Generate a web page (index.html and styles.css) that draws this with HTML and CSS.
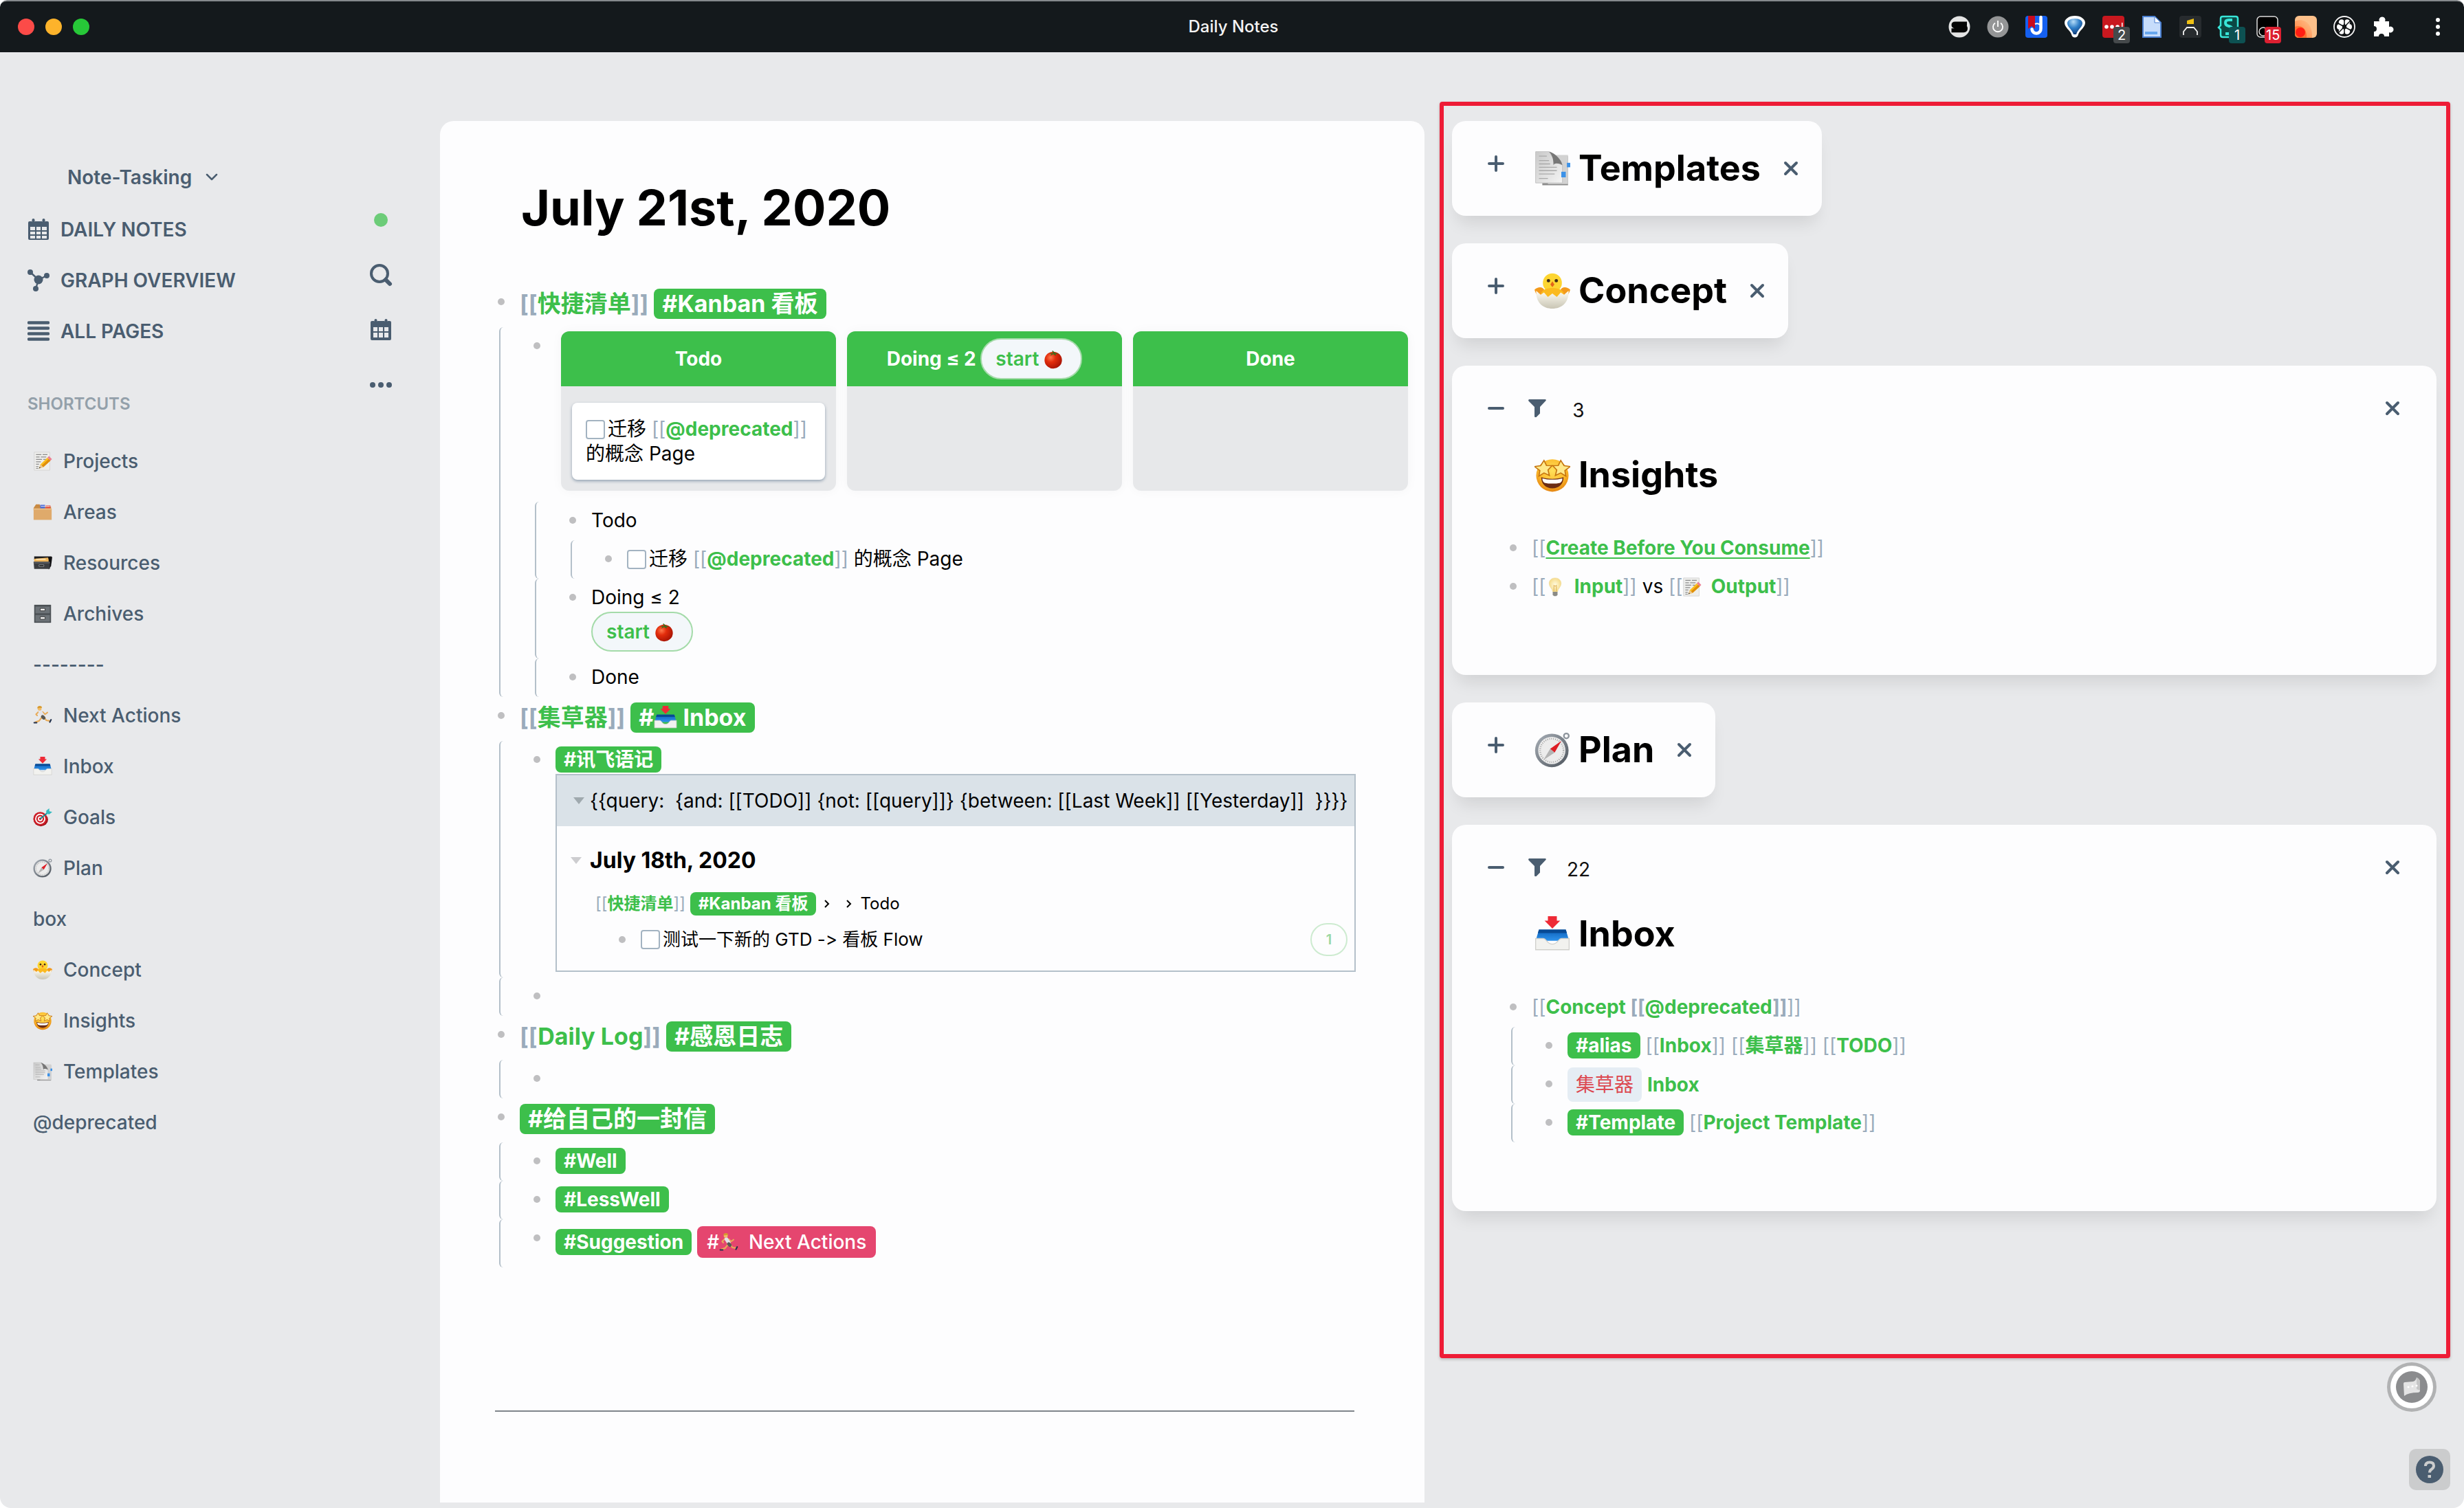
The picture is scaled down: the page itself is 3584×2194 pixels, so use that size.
FILE: index.html
```html
<!DOCTYPE html>
<html lang="en">
<head>
<meta charset="utf-8">
<title>Daily Notes</title>
<meta name="viewport" content="width=device-width, initial-scale=1">
<link rel="stylesheet" href="styles.css">
</head>
<body>
<svg class="sprite" aria-hidden="true">
  <defs>
    <linearGradient id="g-paper" x1="0" y1="0" x2="1" y2="1"><stop offset="0" stop-color="#c9c9c9"/><stop offset="1" stop-color="#f4f4f4"/></linearGradient>
    <linearGradient id="g-blue" x1="0" y1="0" x2="0" y2="1"><stop offset="0" stop-color="#0c5fb8"/><stop offset="1" stop-color="#2f93ec"/></linearGradient>
    <radialGradient id="g-face" cx=".5" cy=".35" r=".7"><stop offset="0" stop-color="#ffe15a"/><stop offset=".6" stop-color="#fbb82a"/><stop offset="1" stop-color="#e07a0c"/></radialGradient>
    <radialGradient id="g-tomato" cx=".35" cy=".35" r=".7"><stop offset="0" stop-color="#ff7a4c"/><stop offset=".4" stop-color="#e32d0c"/><stop offset="1" stop-color="#a81404"/></radialGradient>
    <linearGradient id="g-egg" x1="0" y1="0" x2="0" y2="1"><stop offset="0" stop-color="#fffdf4"/><stop offset="1" stop-color="#c9c5b4"/></linearGradient>
    <linearGradient id="g-steel" x1="0" y1="0" x2="1" y2="1"><stop offset="0" stop-color="#a9b0b8"/><stop offset="1" stop-color="#4d545c"/></linearGradient>
    <radialGradient id="g-bulb"><stop offset="0" stop-color="#fffbe0"/><stop offset="1" stop-color="#f6dc8c"/></radialGradient>
    <linearGradient id="g-orange" x1="1" y1="0" x2="0" y2="1"><stop offset="0" stop-color="#ffc48c"/><stop offset="1" stop-color="#ff7a3c"/></linearGradient>
    <radialGradient id="g-balloon" cx=".4" cy=".2" r=".8"><stop offset="0" stop-color="#b4dcf8"/><stop offset=".5" stop-color="#2f7fc8"/><stop offset="1" stop-color="#123e7c"/></radialGradient>
  </defs>
  <symbol id="e-memo" viewBox="0 0 32 32"><path d="M2 1h26v30H2z" fill="#eeeeec" stroke="#d4d4d2"/><path d="M5 5h9m2 0h8M5 9h6m2 0h9M5 13h10m2 0h5M5 17h8M5 21h5M5 25h4M5 28h4" stroke="#8c8c8c" stroke-width="1.2"/><path d="M10 28l2.500-7L24 10l5 5-12 11z" fill="#fbbf1e"/><path d="M14.500 23L26.500 12l2.500 3-12 11z" fill="#e08e0c"/><path d="M10 28l2.500-7 4.500 5z" fill="#e9c694"/><path d="M10 28l1-2.500 1.600 1.600z" fill="#333"/><path d="M24 10l2.500-2.500 5 5L29 15z" fill="#ed7f93"/></symbol>
  <symbol id="e-dividers" viewBox="0 0 32 32"><path d="M1 9l4-6h6l2 4h17v6H1z" fill="#c88a43"/><path d="M12 4h8v7h-8z" fill="#4a6ad8"/><path d="M21 5h8v6h-8z" fill="#e6523f"/><path d="M13 6h15v1H13z" fill="#f1f1f1"/><path d="M1 10h30v19H1z" fill="#dfaa6b"/><path d="M1 10h30v2H1z" fill="#eabd84"/></symbol>
  <symbol id="e-filebox" viewBox="0 0 32 32"><path d="M2 5h29l-3 6H2z" fill="#1d1d1f"/><path d="M2 9l23-2 3 8H2z" fill="#f1b65a"/><path d="M5 9h16v2H5z" fill="#fbe3b3"/><path d="M26 6l6 0-2 15-4 6z" fill="#0f0f11"/><path d="M1 14h27v12H2z" fill="#3b3d40"/><path d="M1 14h27v3H1z" fill="#56595d"/><path d="M10 19h8v3h-8z" fill="#222" stroke="#8e9195"/></symbol>
  <symbol id="e-cabinet" viewBox="0 0 32 32"><path d="M2 1h28v30H2z" fill="#4b5054"/><path d="M4 4h24v11H4zM4 18h24v11H4z" fill="#6c7277"/><path d="M12 7h8v4h-8zM12 21h8v4h-8z" fill="#f0f0f0" stroke="#333"/></symbol>
  <symbol id="e-runner" viewBox="0 0 32 32"><g fill="none" stroke-linecap="round" stroke-linejoin="round"><path d="M18 18l4 6 6 1" stroke="#e8ab58" stroke-width="2.500"/><path d="M14 20l-4 5-6 2" stroke="#e8ab58" stroke-width="2.500"/><path d="M9 10l-4 4 2 2M16 10l4 4 4-3" stroke="#e8ab58" stroke-width="2.200"/><path d="M12 10l4 6" stroke="#e4e4ea" stroke-width="6"/><path d="M16 18l2 2" stroke="#5b5952" stroke-width="5.500"/><path d="M28 27l2-4M2 28l4 0" stroke="#20304c" stroke-width="2.500"/></g><circle cx="11" cy="4.500" r="3.300" fill="#f1bd6a"/><path d="M7 4c0-5 8-5 8-1z" fill="#d89a2e"/></symbol>
  <symbol id="e-inbox" viewBox="0 0 32 32"><path d="M12 0h8v4h3l-7 7-7-7h3z" fill="#ee2a36"/><path d="M4 12h24l3 10H1z" fill="url(#g-blue)"/><path d="M4 12h24l1 3H3z" fill="#084a94"/><path d="M1 20h7c3 0 3 5 8 5s5-5 8-5h7v10H1z" fill="#f2f2ef" stroke="#cfcfcb" stroke-width=".8"/></symbol>
  <symbol id="e-target" viewBox="0 0 32 32"><ellipse cx="13" cy="20" rx="12" ry="11" fill="#9c0f16"/><circle cx="12" cy="18.500" r="11.500" fill="#cc1f28"/><circle cx="12" cy="18.500" r="8.500" fill="#fff"/><circle cx="12" cy="18.500" r="6.500" fill="#cc1f28"/><circle cx="12" cy="18.500" r="4" fill="#fff"/><circle cx="12" cy="18.500" r="2" fill="#cc1f28"/><path d="M12 18.500L25 8" stroke="#128a8f" stroke-width="2.200"/><path d="M22 10V5l5-4v5l5 1-5 4z" fill="#36bcc1"/></symbol>
  <symbol id="e-compass" viewBox="0 0 32 32"><circle cx="28.500" cy="3.500" r="2.200" fill="none" stroke="#8d949c" stroke-width="1.400"/><circle cx="15.500" cy="16.500" r="15" fill="url(#g-steel)"/><circle cx="15.500" cy="16.500" r="12.200" fill="#ececec"/><circle cx="15.500" cy="16.500" r="10.500" fill="none" stroke="#a4a4a4" stroke-width="1.500" stroke-dasharray=".6 1.200"/><path d="M24 8l-6 10.500-4-3.500z" fill="#dd1f26"/><path d="M8 25l6-10 4 3.500z" fill="#b4b4b4"/></symbol>
  <symbol id="e-chick" viewBox="0 0 32 32"><path d="M0 15c3-3 8-3 9 1l-5 6c-2-2-3-4-4-7zM32 15c-3-3-8-3-9 1l5 6c2-2 3-4 4-7z" fill="#f39a1c"/><circle cx="16" cy="9" r="8.500" fill="#fdd531"/><path d="M6 18c2-6 18-6 20 0v6H6z" fill="#fbba1f"/><path d="M1.500 16l4 3.500 3-2 3.500 4 4-3 4 3 3.500-4 3 2 4-3.500C31 27 24 32 16 32S1 27 1.500 16z" fill="url(#g-egg)"/><circle cx="12.500" cy="7" r="1.500" fill="#3f2a16"/><circle cx="19.500" cy="7" r="1.500" fill="#3f2a16"/><path d="M16 7.500l1.800 3-1.800 2.200-1.800-2.200z" fill="#e3641a"/></symbol>
  <symbol id="e-starstruck" viewBox="0 0 32 32"><circle cx="16" cy="16.500" r="14.500" fill="url(#g-face)"/><path d="M6 18c5 2 15 2 20 0 0 6-4 10-10 10S6 24 6 18z" fill="#6b2c14"/><path d="M7 19c5 1.600 13 1.600 18 0 0 2-1 3.500-2 4-4 1-10 1-14 0-1-.5-2-2-2-4z" fill="#fff"/><path d="M8.500 3l2.200 4.500 5 .2-3.600 3.800 1.200 5-4.800-2.300L4 17l.8-5L0 8.500l5.500-.8z" fill="#ffe98a" stroke="#c5740f" stroke-width="1"/><path d="M23.500 3l-2.200 4.500-5 .2 3.600 3.800-1.200 5 4.800-2.300 4.500 2.800-.8-5L32 8.500l-5.500-.8z" fill="#ffe98a" stroke="#c5740f" stroke-width="1"/></symbol>
  <symbol id="e-tabs" viewBox="0 0 32 32"><path d="M7 5h23v26H7z" fill="#8b8b8b"/><path d="M12 4h18v26H12z" fill="#d2d2d2"/><path d="M29 11h3v4h-3z" fill="#3c92e8"/><path d="M1 1h12c3 5 5 9 12 12v16H1z" fill="url(#g-paper)" stroke="#c2c2c2" stroke-width=".6"/><path d="M13 1c3 0 11 6 12 12-4-2-7-2-8 0 0-5-1-9-4-12z" fill="#777"/><path d="M4 5h7M4 9h9M4 12h10M4 15h16M4 18h16M4 21h14M4 25h8" stroke="#a9a9a9" stroke-width=".9"/><path d="M24 19h4v5h-4z" fill="#3c92e8"/></symbol>
  <symbol id="e-tomato" viewBox="0 0 32 32"><ellipse cx="16" cy="17" rx="14.500" ry="14" fill="url(#g-tomato)"/><path d="M16 6l-7-1 4 2-2 3 5-3 4 3 0-3 5-1-6-1-4-4-1 1z" fill="#3f6d1c"/></symbol>
  <symbol id="e-bulb" viewBox="0 0 32 32"><path d="M16 1c6 0 10 4 10 9 0 6-5 8-6 14h-8c-1-6-6-8-6-14 0-5 4-9 10-9z" fill="url(#g-bulb)" stroke="#ecd796" stroke-width=".6"/><path d="M14 23V13l2 2 2-2v10" fill="none" stroke="#d9a542"/><path d="M12 24h8v5l-2 2h-4l-2-2z" fill="#8b8b86"/></symbol>
  <symbol id="i-calendar" viewBox="0 0 32 32"><path fill-rule="evenodd" d="M3 4h3a3 3 0 0 0 5 0h10a3 3 0 0 0 5 0h3a2 2 0 0 1 2 2v23a2 2 0 0 1-2 2H3a2 2 0 0 1-2-2V6a2 2 0 0 1 2-2zm1 8v5h7v-5zm9 0v5h6v-5zm8 0v5h7v-5zM4 19v4h7v-4zm9 0v4h6v-4zm8 0v4h7v-4zM4 25v4h7v-4zm9 0v4h6v-4zm8 0v4h7v-4z"/><rect x="6.500" y="0" width="4" height="6" rx="2"/><rect x="21.500" y="0" width="4" height="6" rx="2"/></symbol>
  <symbol id="i-calendar-bold" viewBox="0 0 32 32"><path fill-rule="evenodd" d="M3 3h3a3 3 0 0 0 5 0h10a3 3 0 0 0 5 0h3a2 2 0 0 1 2 2v24a2 2 0 0 1-2 2H3a2 2 0 0 1-2-2V5a2 2 0 0 1 2-2zm2 9v6h6v-6zm8 0v6h6v-6zm8 0v6h6v-6zM5 20v7h6v-7zm8 0v7h6v-7zm8 0v7h6v-7z"/><rect x="6.500" y="0" width="4" height="6" rx="2"/><rect x="21.500" y="0" width="4" height="6" rx="2"/></symbol>
  <symbol id="i-graph" viewBox="0 0 32 32"><path d="M4 4l12 11L28 9M16 15l-4 13" fill="none" stroke="currentColor" stroke-width="2.500"/><circle cx="4" cy="4" r="4"/><circle cx="28" cy="9" r="4"/><circle cx="16" cy="15" r="6.500"/><circle cx="12" cy="28" r="4"/></symbol>
  <symbol id="i-list" viewBox="0 0 32 32"><path d="M2 3.500h28M2 11.500h28M2 19.500h28M2 27.500h28" fill="none" stroke="currentColor" stroke-width="4.500" stroke-linecap="round"/></symbol>
  <symbol id="i-plus" viewBox="0 0 24 24"><path d="M12 2v20M2 12h20" fill="none" stroke="currentColor" stroke-width="4" stroke-linecap="round"/></symbol>
  <symbol id="i-minus" viewBox="0 0 24 24"><path d="M2 12h20" fill="none" stroke="currentColor" stroke-width="4" stroke-linecap="round"/></symbol>
  <symbol id="i-close" viewBox="0 0 24 24"><path d="M4 4l16 16M20 4L4 20" fill="none" stroke="currentColor" stroke-width="4" stroke-linecap="round"/></symbol>
  <symbol id="i-filter" viewBox="0 0 26 26"><path d="M1 0h24q1.500 1 0 2.500L17 11v9.500L11.500 26q-2 .5-2.500-1V11L.5 2.500Q-.5 1 1 0z"/></symbol>
</svg>

<header class="topbar">
  <div class="lights"><span class="light light-red"></span><span class="light light-yellow"></span><span class="light light-green"></span></div>
  <h1 class="window-title">Daily Notes</h1>
  <div class="extensions">
    <button class="ext" aria-label="Session"><svg viewBox="0 0 32 32"><circle cx="16" cy="16" r="15.500" fill="#e4e4e4"/><path d="M27 11.500H10q-2.500 0-2.500 1.800t2.500 2.200h12q3 .5 3 3t-3 2.700H4.500" fill="none" stroke="#050505" stroke-width="6"/></svg></button>
    <button class="ext" aria-label="Power"><svg viewBox="0 0 32 32"><circle cx="16" cy="16" r="15.500" fill="#949596"/><path d="M12 10.500a7 7 0 1 0 8 0M16 7v9" fill="none" stroke="#fff" stroke-width="1.800"/></svg></button>
    <button class="ext" aria-label="Dictionary"><svg viewBox="0 0 32 32"><rect width="32" height="32" rx="4" fill="#1560f0"/><path d="M4 0h10v19l-5-4-5 4z" fill="#c80a1e"/><path d="M14 12q4-2 7 1" fill="none" stroke="#fff" stroke-width="2"/><path d="M22.500 2v16.500a6.500 6.500 0 0 1-13 1" fill="none" stroke="#fff" stroke-width="4.500" stroke-linecap="round"/></svg></button>
    <button class="ext" aria-label="Balloon"><svg viewBox="0 0 32 32"><path d="M16 0c9 0 15 5 15 10 0 7-8 11-10 17-1 6-9 6-10 0C9 21 1 17 1 10 1 5 7 0 16 0z" fill="#fff"/><path d="M16 4c7 0 11 3 11 7 0 5-7 9-9 16h-4C12 20 5 16 5 11c0-4 4-7 11-7z" fill="url(#g-balloon)"/></svg></button>
    <button class="ext" aria-label="Password"><svg viewBox="0 0 32 32"><rect width="32" height="32" rx="4" fill="#c9181f"/><g fill="#fff"><circle cx="6" cy="16" r="2.800"/><circle cx="14" cy="16" r="2.800"/><circle cx="22" cy="16" r="2.800"/><path d="M28 10h1.500v8H28z"/></g></svg><span class="badge badge-grey">2</span></button>
    <button class="ext" aria-label="Document"><svg viewBox="0 0 32 32"><path d="M3 1h17l9 9v21H3z" fill="#c7ddfb" stroke="#4a7fd0" stroke-width="2"/><path d="M20 1v9h9z" fill="#fff" stroke="#4a7fd0"/><path d="M6 23h18v4H6z" fill="#67a7ee"/></svg></button>
    <button class="ext" aria-label="Highlighter"><svg viewBox="0 0 32 32"><rect width="32" height="32" rx="4" fill="#272b2e"/><path d="M11 7l10-3v8H11z" fill="#efc114"/><path d="M6 28v-5l5-6h10l5 6v5" fill="none" stroke="#f4f4f4" stroke-width="1.800"/></svg></button>
    <button class="ext" aria-label="Surfing"><svg viewBox="0 0 32 32"><path d="M4 4q0-3 3-3h19q3 0 3 3v24q0 3-3 3H7q-3 0-3-3v-8l-3-3 3-3z" fill="#0b4844" stroke="#38e5d8" stroke-width="2.500"/><path d="M21 6h-5q-5 0-5 4t5 5 5 5-5 6h-5" fill="none" stroke="#38e5d8" stroke-width="4"/></svg><span class="badge badge-teal">1</span></button>
    <button class="ext" aria-label="Tabs"><svg viewBox="0 0 32 32"><rect x="1" y="1" width="30" height="30" rx="5" fill="#000" stroke="#ddd" stroke-width="1.500"/><circle cx="10" cy="23" r="6" fill="none" stroke="#ddd" stroke-width="1.500"/></svg><span class="badge badge-red">15</span></button>
    <button class="ext" aria-label="Clipper"><svg viewBox="0 0 32 32"><rect width="32" height="32" rx="6" fill="#fdc08a"/><path d="M0 8c14-6 26 4 25 24H6q-6 0-6-6z" fill="url(#g-orange)"/><path d="M0 16c10-4 18 4 17 16H6q-6 0-6-6z" fill="#ff7030"/><circle cx="8" cy="24" r="7" fill="#ff1d14"/></svg></button>
    <button class="ext" aria-label="Clover"><svg viewBox="0 0 32 32"><circle cx="16" cy="16" r="15" fill="#101315" stroke="#f4f4f4" stroke-width="1.800"/><g fill="#fff"><circle cx="12" cy="9.500" r="4.200"/><circle cx="20" cy="9.500" r="4.200"/><circle cx="9" cy="16" r="4"/><circle cx="23" cy="16" r="4"/><circle cx="12" cy="22.500" r="4.200"/><circle cx="20" cy="22.500" r="4.200"/></g><path d="M7 25L25 7M16 6v20M7 11l18 10" stroke="#101315" stroke-width="1.500"/></svg></button>
    <button class="ext" aria-label="Extensions"><svg viewBox="0 0 32 32"><path d="M3 8h8a4.500 4.500 0 1 1 8 0h6v8a4.500 4.500 0 1 1 0 8v6h-7a4 4 0 1 0-8 0H3v-7a4 4 0 1 0 0-8z" fill="#fff"/></svg></button>
    <button class="ext ext-menu" aria-label="Menu"><svg viewBox="0 0 32 32"><g fill="#fff"><circle cx="16" cy="6" r="3"/><circle cx="16" cy="16" r="3"/><circle cx="16" cy="26" r="3"/></g></svg></button>
  </div>
</header>

<div class="layout">
  <div class="sidebar">
    <nav class="side-nav" aria-label="Sidebar">
      <button class="graph-switch">Note-Tasking <svg class="chevron" viewBox="0 0 18 12"><path d="M2 2l7 7 7-7" fill="none" stroke="currentColor" stroke-width="2.500" stroke-linecap="round" stroke-linejoin="round"/></svg></button>
      <a class="nav-link" href="#daily"><svg class="icon-32"><use href="#i-calendar"/></svg>DAILY NOTES</a>
      <a class="nav-link" href="#graph"><svg class="icon-32"><use href="#i-graph"/></svg>GRAPH OVERVIEW</a>
      <a class="nav-link" href="#all"><svg class="icon-32"><use href="#i-list"/></svg>ALL PAGES</a>
      <h2 class="shortcuts-title">SHORTCUTS</h2>
      <ul class="shortcuts">
        <li><a href="#projects"><svg class="emoji-28"><use href="#e-memo"/></svg>Projects</a></li>
        <li><a href="#areas"><svg class="emoji-28"><use href="#e-dividers"/></svg>Areas</a></li>
        <li><a href="#resources"><svg class="emoji-28"><use href="#e-filebox"/></svg>Resources</a></li>
        <li><a href="#archives"><svg class="emoji-28"><use href="#e-cabinet"/></svg>Archives</a></li>
        <li><a href="#divider">--------</a></li>
        <li><a href="#next"><svg class="emoji-28"><use href="#e-runner"/></svg>Next Actions</a></li>
        <li><a href="#inbox"><svg class="emoji-28"><use href="#e-inbox"/></svg>Inbox</a></li>
        <li><a href="#goals"><svg class="emoji-28"><use href="#e-target"/></svg>Goals</a></li>
        <li><a href="#plan"><svg class="emoji-28"><use href="#e-compass"/></svg>Plan</a></li>
        <li><a href="#box">box</a></li>
        <li><a href="#concept"><svg class="emoji-28"><use href="#e-chick"/></svg>Concept</a></li>
        <li><a href="#insights"><svg class="emoji-28"><use href="#e-starstruck"/></svg>Insights</a></li>
        <li><a href="#templates"><svg class="emoji-28"><use href="#e-tabs"/></svg>Templates</a></li>
        <li><a href="#deprecated">@deprecated</a></li>
      </ul>
    </nav>
    <div class="tools">
      <span class="tool"><span class="sync-dot"></span></span>
      <button class="tool" aria-label="Search"><svg class="icon-32" viewBox="0 0 32 32"><circle cx="14" cy="14" r="12" fill="none" stroke="currentColor" stroke-width="4"/><path d="M23 23l6 6" fill="none" stroke="currentColor" stroke-width="6" stroke-linecap="round"/></svg></button>
      <button class="tool" aria-label="Calendar"><svg class="icon-32"><use href="#i-calendar-bold"/></svg></button>
      <button class="tool" aria-label="More"><svg class="icon-32" viewBox="0 0 32 32"><circle cx="4" cy="16" r="4"/><circle cx="16" cy="16" r="4"/><circle cx="28" cy="16" r="4"/></svg></button>
    </div>
  </div>

  <main class="page">
    <h2 class="page-title">July 21st, 2020</h2>
    <ul class="blocks">
      <li>
        <div class="row head"><span class="bullet"></span><div class="text"><span class="br">[[</span><a class="ref" href="#k">快捷清单</a><span class="br">]]</span> <a class="tag" href="#kanban">#Kanban 看板</a></div></div>
        <ul>
          <li>
            <div class="row kanban-row"><span class="bullet"></span>
              <div class="kanban">
                <section class="column"><h3 class="column-head">Todo</h3>
                  <div class="card"><label><input class="check" type="checkbox">迁移 <span class="br">[[</span><a class="ref" href="#deprecated">@deprecated</a><span class="br">]]</span><br>的概念 Page</label></div>
                </section>
                <section class="column"><h3 class="column-head">Doing ≤ 2&nbsp;<button class="pill">start <svg class="emoji-28"><use href="#e-tomato"/></svg></button></h3></section>
                <section class="column"><h3 class="column-head">Done</h3></section>
              </div>
            </div>
            <ul>
              <li>
                <div class="row"><span class="bullet"></span><div class="text">Todo</div></div>
                <ul>
                  <li><div class="row"><span class="bullet"></span><label class="text"><input class="check" type="checkbox">迁移 <span class="br">[[</span><a class="ref" href="#deprecated">@deprecated</a><span class="br">]]</span> 的概念 Page</label></div></li>
                </ul>
              </li>
              <li><div class="row"><span class="bullet"></span><div class="text">Doing ≤ 2<button class="pill pill-block">start <svg class="emoji-28"><use href="#e-tomato"/></svg></button></div></div></li>
              <li><div class="row"><span class="bullet"></span><div class="text">Done</div></div></li>
            </ul>
          </li>
        </ul>
      </li>
      <li>
        <div class="row head"><span class="bullet"></span><div class="text"><span class="br">[[</span><a class="ref" href="#j">集草器</a><span class="br">]]</span> <a class="tag" href="#inbox">#<svg class="emoji-34"><use href="#e-inbox"/></svg> Inbox</a></div></div>
        <ul>
          <li>
            <div class="row query-row"><span class="bullet"></span><div class="text"><a class="tag" href="#x">#讯飞语记</a>
              <section class="query">
                <div class="query-head"><span class="caret"></span>{{query:&nbsp; {and: [[TODO]] {not: [[query]]} {between: [[Last Week]] [[Yesterday]]&nbsp; }}}}</div>
                <h3 class="query-date"><span class="caret caret-light"></span>July 18th, 2020</h3>
                <div class="crumbs"><span><span class="br">[[</span><a class="ref" href="#k">快捷清单</a><span class="br">]]</span> <a class="tag" href="#kanban">#Kanban 看板</a></span>
                  <svg class="crumb-arrow" viewBox="0 0 8 12"><path d="M1 1l5 5-5 5" fill="none" stroke="currentColor" stroke-width="2"/></svg><svg class="crumb-arrow" viewBox="0 0 8 12"><path d="M1 1l5 5-5 5" fill="none" stroke="currentColor" stroke-width="2"/></svg><span>Todo</span></div>
                <div class="result"><span class="bullet"></span><label class="result-text"><input class="check" type="checkbox">测试一下新的 GTD -&gt; 看板 Flow</label><button class="count">1</button></div>
              </section></div></div>
          </li>
          <li><div class="row"><span class="bullet"></span></div></li>
        </ul>
      </li>
      <li>
        <div class="row head"><span class="bullet"></span><div class="text"><span class="br">[[</span><a class="ref" href="#log">Daily Log</a><span class="br">]]</span> <a class="tag" href="#g">#感恩日志</a></div></div>
        <ul><li><div class="row"><span class="bullet"></span></div></li></ul>
      </li>
      <li>
        <div class="row head"><span class="bullet"></span><div class="text"><a class="tag" href="#letter">#给自己的一封信</a></div></div>
        <ul>
          <li><div class="row"><span class="bullet"></span><div class="text"><a class="tag" href="#well">#Well</a></div></div></li>
          <li><div class="row"><span class="bullet"></span><div class="text"><a class="tag" href="#less">#LessWell</a></div></div></li>
          <li><div class="row tall"><span class="bullet"></span><div class="text"><a class="tag" href="#sug">#Suggestion</a><a class="tag tag-pink" href="#next">#<svg class="emoji-28"><use href="#e-runner"/></svg>&nbsp; Next Actions</a></div></div></li>
        </ul>
      </li>
    </ul>
    <hr class="rule">
  </main>

  <aside class="stack">
    <section class="panel folded"><button class="icon-btn lift" aria-label="Expand"><svg class="icon-24"><use href="#i-plus"/></svg></button><h2 class="panel-title"><svg class="emoji-52"><use href="#e-tabs"/></svg>Templates</h2><button class="icon-btn" aria-label="Close"><svg class="icon-24"><use href="#i-close"/></svg></button></section>
    <section class="panel folded"><button class="icon-btn lift" aria-label="Expand"><svg class="icon-24"><use href="#i-plus"/></svg></button><h2 class="panel-title"><svg class="emoji-52"><use href="#e-chick"/></svg>Concept</h2><button class="icon-btn" aria-label="Close"><svg class="icon-24"><use href="#i-close"/></svg></button></section>
    <section class="panel open">
      <div class="panel-bar"><button class="icon-btn" aria-label="Collapse"><svg class="icon-24"><use href="#i-minus"/></svg></button><button class="icon-btn" aria-label="Filter"><svg class="icon-26"><use href="#i-filter"/></svg></button><span class="panel-count">3</span><button class="icon-btn push" aria-label="Close"><svg class="icon-24"><use href="#i-close"/></svg></button></div>
      <h2 class="panel-title"><svg class="emoji-52"><use href="#e-starstruck"/></svg>Insights</h2>
      <ul class="blocks">
        <li><div class="row"><span class="bullet"></span><div class="text"><span class="br">[[</span><a class="ref underlined" href="#create">Create Before You Consume</a><span class="br">]]</span></div></div></li>
        <li><div class="row"><span class="bullet"></span><div class="text"><span class="br">[[</span><a class="ref" href="#in"><svg class="emoji-28"><use href="#e-bulb"/></svg>&nbsp; Input</a><span class="br">]]</span> vs <span class="br">[[</span><a class="ref" href="#out"><svg class="emoji-28"><use href="#e-memo"/></svg>&nbsp; Output</a><span class="br">]]</span></div></div></li>
      </ul>
    </section>
    <section class="panel folded"><button class="icon-btn lift" aria-label="Expand"><svg class="icon-24"><use href="#i-plus"/></svg></button><h2 class="panel-title"><svg class="emoji-52"><use href="#e-compass"/></svg>Plan</h2><button class="icon-btn" aria-label="Close"><svg class="icon-24"><use href="#i-close"/></svg></button></section>
    <section class="panel open">
      <div class="panel-bar"><button class="icon-btn" aria-label="Collapse"><svg class="icon-24"><use href="#i-minus"/></svg></button><button class="icon-btn" aria-label="Filter"><svg class="icon-26"><use href="#i-filter"/></svg></button><span class="panel-count">22</span><button class="icon-btn push" aria-label="Close"><svg class="icon-24"><use href="#i-close"/></svg></button></div>
      <h2 class="panel-title"><svg class="emoji-52"><use href="#e-inbox"/></svg>Inbox</h2>
      <ul class="blocks">
        <li>
          <div class="row"><span class="bullet"></span><div class="text"><span class="br">[[</span><a class="ref" href="#cd">Concept <span class="br">[[</span>@deprecated<span class="br">]]</span></a><span class="br">]]</span></div></div>
          <ul>
            <li><div class="row"><span class="bullet"></span><div class="text"><a class="tag" href="#alias">#alias</a> <span class="br">[[</span><a class="ref" href="#inbox">Inbox</a><span class="br">]]</span> <span class="br">[[</span><a class="ref" href="#j">集草器</a><span class="br">]]</span> <span class="br">[[</span><a class="ref" href="#todo">TODO</a><span class="br">]]</span></div></div></li>
            <li><div class="row code-row"><span class="bullet"></span><div class="text"><code class="code">集草器</code> <a class="ref" href="#inbox">Inbox</a></div></div></li>
            <li><div class="row"><span class="bullet"></span><div class="text"><a class="tag" href="#template">#Template</a> <span class="br">[[</span><a class="ref" href="#pt">Project Template</a><span class="br">]]</span></div></div></li>
          </ul>
        </li>
      </ul>
    </section>
  </aside>
</div>

<button class="chat" aria-label="Chat"><svg viewBox="0 0 72 72"><circle cx="36" cy="36" r="36" fill="#b1b2b3"/><circle cx="36" cy="36" r="31" fill="#fff"/><circle cx="36" cy="36" r="23" fill="#8b8c8e"/><path d="M24 31q0-2 2-2l12-1q4-1 5-6 4 2 5 5v15q-1 2-3 2-14 0-20 5z" fill="#e4e4e4"/><path d="M43 22q4 2 5 5v14l-5-2z" fill="#c6c6c6"/><g fill="#fff"><circle cx="31" cy="36" r="1.500"/><circle cx="37" cy="35" r="1.500"/><circle cx="43" cy="34" r="1.500"/></g></svg></button>
<button class="help" aria-label="Help"><svg viewBox="0 0 40 40"><circle cx="20" cy="20" r="20" fill="#4a5d70"/><path d="M14 15q0-5.500 6-5.500t6 5q0 3-3 5-3 1.800-3 5" fill="none" stroke="#cbcccd" stroke-width="4"/><path d="M17.500 28h4.500v4h-4.500z" fill="#cbcccd"/></svg></button>
</body>
</html>
```
FILE: styles.css
```css
:root {
  --green: #3dbf4b;
  --slate: #4a5d70;
  --bracket: #9aabbb;
  --line: #b4c0ca;
  --paper: #fdfdfe;
  --canvas: #e8e9eb;
}

* { box-sizing: border-box; }

html { background: #fff; }

body {
  margin: 0;
  min-height: 100vh;
  display: flex;
  flex-direction: column;
  overflow-x: hidden;
  background: var(--canvas);
  border-radius: 10px 10px 16px 16px;
  color: #000;
  font-family: Inter, "Noto Sans CJK SC", "Liberation Sans", sans-serif;
  font-size: 28px;
  line-height: 38px;
  font-feature-settings: "calt" 0;
}

h1, h2, h3, ul { margin: 0; padding: 0; }
ul { list-style: none; }
a { color: inherit; text-decoration: none; }
button {
  margin: 0;
  padding: 0;
  border: 0;
  background: none;
  color: inherit;
  font: inherit;
  cursor: pointer;
}
svg { display: block; fill: currentColor; flex: none; overflow: visible; }
.sprite { position: absolute; width: 0; height: 0; }

.icon-24 { width: 24px; height: 24px; }
.icon-26 { width: 26px; height: 26px; }
.icon-32 { width: 32px; height: 32px; }
.emoji-28 { width: 28px; height: 28px; }
.emoji-34 { width: 34px; height: 34px; }
.emoji-52 { width: 52px; height: 52px; }

/* window bar */
.topbar {
  height: 76px;
  display: grid;
  grid-template-columns: 1fr auto 1fr;
  align-items: center;
  padding: 0 22px 0 26px;
  background: #14191c;
  border-top: 2px solid #85898c;
  border-radius: 10px 10px 0 0;
}
.lights { display: flex; gap: 16px; }
.light { width: 24px; height: 24px; border-radius: 50%; }
.light-red { background: #fc4b48; }
.light-yellow { background: #fdb32b; }
.light-green { background: #27c838; }
.window-title { color: #f4f4f4; font-size: 24px; line-height: 32px; font-weight: 500; }
.extensions { display: flex; justify-content: flex-end; gap: 24px; }
.ext { position: relative; width: 32px; height: 32px; }
.ext svg { width: 32px; height: 32px; }
.ext-menu { margin-left: 24px; }
.badge {
  position: absolute;
  left: 16px;
  top: 16px;
  min-width: 24px;
  height: 24px;
  padding: 0 2px;
  border-radius: 4px;
  color: #fff;
  font-size: 20px;
  line-height: 24px;
  text-align: center;
}
.badge-grey { background: #45494b; }
.badge-teal { background: #0d5152; }
.badge-red { left: 12px; background: #dc2031; }

/* columns */
.layout {
  flex: 1;
  display: grid;
  grid-template-columns: 640px minmax(0, 1432fr) minmax(0, 1512fr);
  align-items: start;
}

.sidebar {
  display: flex;
  justify-content: space-between;
  padding: 142px 46px 40px 40px;
  color: var(--slate);
}
.graph-switch {
  height: 79px;
  display: flex;
  align-items: center;
  gap: 20px;
  padding-left: 58px;
  font-weight: 600;
}
.chevron { width: 18px; height: 12px; }
.nav-link { height: 74px; display: flex; align-items: center; gap: 16px; font-weight: 600; }
.shortcuts-title {
  padding: 53px 0 30px;
  color: #93a0aa;
  font-size: 24px;
  line-height: 32px;
  font-weight: 600;
}
.shortcuts a {
  height: 74px;
  display: flex;
  align-items: center;
  gap: 16px;
  padding-left: 8px;
  font-weight: 500;
}
.tools { margin-top: 62px; display: flex; flex-direction: column; }
.tool { width: 80px; height: 80px; display: flex; align-items: center; justify-content: center; }
.sync-dot { width: 20px; height: 20px; border-radius: 50%; background: #6ccc78; }

/* daily page */
.page {
  min-height: calc(100vh - 184px);
  margin: 100px 0 8px;
  padding: 82px 100px 132px 76px;
  background: var(--paper);
  border-radius: 20px 20px 0 0;
}
.page-title { margin: 0 0 66px 42px; font-size: 72px; line-height: 88px; font-weight: 700; }
.rule { height: 2px; margin: 208px 2px 0 4px; border: 0; background: #7f858b; }

/* outline */
.blocks li li {
  margin-left: 10px;
  padding-left: 40px;
  border-left: 2px solid var(--line);
  border-radius: 6px;
}
.row { display: flex; gap: 14px; min-height: 56px; }
.bullet { width: 26px; height: 54px; flex: none; display: flex; align-items: center; justify-content: center; }
.bullet::before { content: ""; width: 10px; height: 10px; border-radius: 50%; background: #bfbfc1; }
.text { flex: 1; min-width: 0; padding: 8px 0 10px; white-space: nowrap; }
.text svg, .pill svg { display: inline-block; vertical-align: -5px; }
.br { color: var(--bracket); }
.ref { color: var(--green); font-weight: 700; }
.underlined { text-decoration: underline; text-decoration-thickness: 2px; text-underline-offset: 4px; }
.tag {
  display: inline-block;
  padding: 0 12px;
  border-radius: 8px;
  background: var(--green);
  color: #fff;
  font-weight: 700;
}
.head { min-height: 64px; font-size: 34px; line-height: 44px; font-weight: 700; }
.head .text { padding: 8px 0 12px; }
.tall .text { display: flex; align-items: center; gap: 8px; padding: 10px 0 14px; }
.tag-pink { padding: 0 14px; background: #e5466f; line-height: 46px; font-weight: 500; }
.check {
  appearance: none;
  width: 28px;
  height: 28px;
  margin: 0 4px 0 0;
  vertical-align: -5px;
  border: 2px solid #a3b3c1;
  border-radius: 4px;
  background: #fff;
}
.pill {
  height: 60px;
  padding: 0 26px 0 20px;
  border: 2px solid #a4dba9;
  border-radius: 30px;
  background: #f3f7fa;
  color: var(--green);
  font-weight: 600;
  white-space: nowrap;
}
.pill-block { display: block; margin-top: 2px; height: 58px; }

/* kanban board */
.kanban { display: flex; align-items: stretch; gap: 16px; padding: 6px 0 16px 8px; }
.column {
  width: 400px;
  flex: none;
  min-height: 232px;
  border-radius: 12px;
  background: #e7e8ea;
  box-shadow: 0 0 16px rgba(0, 0, 0, 0.04);
}
.column-head {
  height: 80px;
  display: flex;
  align-items: center;
  justify-content: center;
  border-radius: 12px 12px 0 0;
  background: var(--green);
  color: #fff;
  font-size: 28px;
  font-weight: 700;
}
.card {
  margin: 24px 16px 16px;
  padding: 20px;
  border-radius: 8px;
  background: #fff;
  box-shadow: 0 2px 4px rgba(90, 115, 140, 0.6);
  line-height: 36px;
  white-space: nowrap;
}

/* query result */
.query-row .text { padding-bottom: 8px; }
.query { margin-top: 2px; min-height: 288px; border: 2px solid var(--line); }
.query-head {
  height: 74px;
  display: flex;
  align-items: center;
  gap: 8px;
  padding: 0 20px 0 24px;
  background: #dae2e8;
}
.caret { border: 8px solid transparent; border-top: 10px solid #9fa9ae; border-bottom: 0; }
.caret-light { border-top-color: #cdcdd0; }
.query-date {
  display: flex;
  align-items: center;
  gap: 12px;
  padding: 30px 20px 26px;
  font-size: 32px;
  line-height: 40px;
  font-weight: 700;
}
.crumbs { display: flex; align-items: center; padding-left: 56px; font-size: 24px; line-height: 34px; color: #000; }
.crumb-arrow { width: 8px; height: 12px; margin: 0 12px; }
.result { display: flex; align-items: center; gap: 14px; height: 70px; padding: 0 10px 0 82px; font-size: 26px; }
.result-text { flex: 1; }
.count {
  width: 54px;
  height: 48px;
  border: 2px solid #cdebd0;
  border-radius: 24px;
  color: #9bd8a2;
  font-size: 20px;
  line-height: 24px;
  font-weight: 600;
}

/* right-hand stack */
.stack {
  display: flex;
  flex-direction: column;
  align-items: flex-start;
  gap: 40px;
  margin: 72px 20px 0 22px;
  padding: 22px 14px 208px 12px;
  border: 6px solid #ee1c36;
  border-radius: 4px;
  box-shadow: 0 2px 4px rgba(0, 0, 0, 0.2);
}
.panel { border-radius: 20px; background: var(--paper); box-shadow: 0 18px 24px -8px rgba(0, 0, 0, 0.1); }
.folded { display: flex; align-items: center; padding: 37px 33px 37px 52px; }
.lift { padding-bottom: 14px; margin-right: 44px; }
.folded .panel-title { margin-right: 32px; }
.icon-btn { color: var(--slate); }
.panel-title { display: flex; align-items: center; gap: 12px; font-size: 52px; line-height: 64px; font-weight: 700; }
.open { align-self: stretch; padding: 48px 52px 100px 76px; }
.panel-bar { display: flex; align-items: center; height: 28px; margin-left: -24px; gap: 23px; }
.panel-bar .icon-btn:first-child { margin-right: 12px; }
.panel-count { width: 48px; padding-top: 6px; text-align: center; color: #111; }
.push { margin-left: auto; }
.open .panel-title { margin: 51px 0 47px 44px; }
.code-row .text { padding: 3px 0; line-height: 50px; }
.code {
  display: inline-block;
  padding: 0 12px;
  border-radius: 8px;
  background: #e5edf4;
  color: #dc4850;
  font-family: inherit;
}

/* floating buttons */
.chat { position: fixed; right: 40px; bottom: 140px; width: 72px; height: 72px; }
.help {
  position: fixed;
  right: 20px;
  bottom: 26px;
  width: 60px;
  height: 60px;
  padding: 10px;
  border-radius: 10px;
  background: #cbcccd;
}
```
